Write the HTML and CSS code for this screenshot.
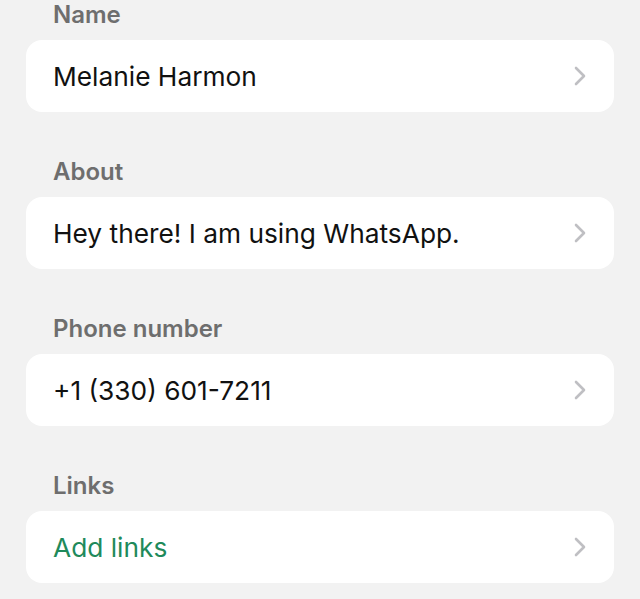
FILE: index.html
```html
<!DOCTYPE html>
<html lang="en">
	<head>
		<meta charset="utf-8">
		<title>Profile</title>
		<link rel="stylesheet" href="styles.css">
	</head>
	<body>
		<div id="content">
			<div class="group">
				<div class="label">Name</div>
				<div class="row">
					<span class="value">Melanie Harmon</span>
					<svg class="chevron" width="12" height="20" viewBox="0 0 12 20"><path d="M2 2 L10 10 L2 18" /></svg>
				</div>
			</div>
			<div class="group">
				<div class="label">About</div>
				<div class="row">
					<span class="value">Hey there! I am using WhatsApp.</span>
					<svg class="chevron" width="12" height="20" viewBox="0 0 12 20"><path d="M2 2 L10 10 L2 18" /></svg>
				</div>
			</div>
			<div class="group">
				<div class="label">Phone number</div>
				<div class="row">
					<span class="value">+1 (330) 601-7211</span>
					<svg class="chevron" width="12" height="20" viewBox="0 0 12 20"><path d="M2 2 L10 10 L2 18" /></svg>
				</div>
			</div>
			<div class="group">
				<div class="label">Links</div>
				<div class="row">
					<span class="value link">Add links</span>
					<svg class="chevron" width="12" height="20" viewBox="0 0 12 20"><path d="M2 2 L10 10 L2 18" /></svg>
				</div>
			</div>
		</div>
	</body>
</html>
```

FILE: styles.css
```css
:root {
	--background-color: #f2f2f2;
	--card-color: #fff;
	--font-color: #111;
	--label-color: #6e6e6e;
	--link-color: #1f8a5b;
	--chevron-color: #bfbfc3;
}
body {
	margin: 0;
	background-color: var(--background-color);
	font-family: Inter, "Noto Sans", sans-serif;
}
#content {
	padding: 0 26px;
}
.group {
	margin-bottom: 45px;
}
.label {
	font-size: 24px;
	font-weight: 600;
	line-height: 29px;
	color: var(--label-color);
	padding-left: 27px;
	margin-bottom: 11px;
}
.row {
	display: flex;
	align-items: center;
	justify-content: space-between;
	height: 72px;
	padding: 0 28px 0 27px;
	background: var(--card-color);
	border-radius: 16px;
}
.value {
	font-size: 26.3px;
	color: var(--font-color);
}
.link {
	color: var(--link-color);
}
.chevron path {
	fill: none;
	stroke: var(--chevron-color);
	stroke-width: 2.6;
	stroke-linecap: round;
	stroke-linejoin: round;
}
```
